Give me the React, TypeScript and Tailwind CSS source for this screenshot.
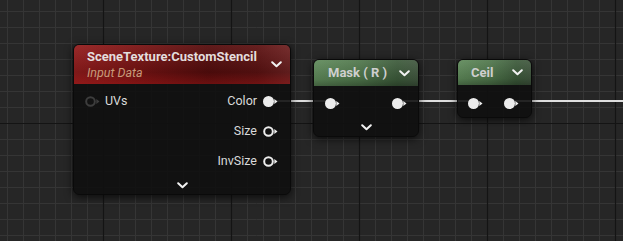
import React from "react";

function Pin({ filled, dim }: { filled?: boolean; dim?: boolean }) {
  const c = dim ? "#3d3d3d" : "#ececec";
  return (
    <svg width="15" height="11" viewBox="0 0 15 11" className="shrink-0">
      {filled ? (
        <circle cx="5.5" cy="5.5" r="5.5" fill={c} />
      ) : (
        <circle cx="5.5" cy="5.5" r="4.3" fill={dim ? "#121212" : "none"} stroke={c} strokeWidth="2" />
      )}
      <path d="M11.3 3 L14.5 5.5 L11.3 8 Z" fill={c} />
    </svg>
  );
}

function Chevron() {
  return (
    <svg width="11" height="7" viewBox="0 0 11 7" className="shrink-0">
      <polyline points="1.2,1.2 5.5,5.3 9.8,1.2" fill="none" stroke="#f2f2f2" strokeWidth="2" strokeLinecap="round" strokeLinejoin="round" />
    </svg>
  );
}

function Grid() {
  const v: number[] = [];
  for (let x = 7; x < 623; x += 16) v.push(x);
  const h: number[] = [];
  for (let y = 11; y < 241; y += 16) h.push(y);
  const majorX = (x: number) => (x - 103) % 128 === 0;
  const majorY = (y: number) => y === 123;
  return (
    <svg className="absolute inset-0" width="623" height="241" viewBox="0 0 623 241">
      <rect width="623" height="241" fill="#262626" />
      {v.filter((x) => !majorX(x)).map((x) => (
        <line key={"v" + x} x1={x + 0.5} y1={0} x2={x + 0.5} y2={241} stroke="#353535" strokeWidth="1" />
      ))}
      {h.filter((y) => !majorY(y)).map((y) => (
        <line key={"h" + y} x1={0} y1={y + 0.5} x2={623} y2={y + 0.5} stroke="#353535" strokeWidth="1" />
      ))}
      {v.filter(majorX).map((x) => (
        <line key={"V" + x} x1={x + 0.5} y1={0} x2={x + 0.5} y2={241} stroke="#141414" strokeWidth="1.2" />
      ))}
      {h.filter(majorY).map((y) => (
        <line key={"H" + y} x1={0} y1={y + 0.5} x2={623} y2={y + 0.5} stroke="#141414" strokeWidth="1.2" />
      ))}
      <line x1="272" y1="101" x2="330" y2="101" stroke="#dedede" strokeWidth="2" />
      <line x1="400" y1="101" x2="472" y2="101" stroke="#dedede" strokeWidth="2" />
      <line x1="512" y1="101" x2="623" y2="101" stroke="#dedede" strokeWidth="2" />
    </svg>
  );
}

export default function App() {
  const font = { fontFamily: "Roboto, 'Noto Sans', sans-serif" };
  return (
    <div className="relative w-[623px] h-[241px] overflow-hidden bg-[#262626]" style={font}>
      <Grid />

      {/* SceneTexture node */}
      <div className="absolute left-[73px] top-[44px] w-[218px] h-[151px] rounded-[6px] border border-[#0a0a0a] bg-[#0f100f]/90 shadow-[0_2px_8px_rgba(0,0,0,0.7)] overflow-hidden flex flex-col">
        <div className="h-[39px] shrink-0 flex items-center justify-between pl-[13px] pr-[8px] bg-[linear-gradient(to_bottom,rgba(255,255,255,0.06),rgba(0,0,0,0.15)_70%,rgba(140,20,20,0.4)),linear-gradient(to_right,#951d1d_0%,#7c1414_28%,#560d0d_62%,#5d1212_85%,#6f2222_100%)]">
          <div className="flex flex-col">
            <div className="text-[13px] font-bold leading-[15px] text-[#e4dddd]">SceneTexture:CustomStencil</div>
            <div className="text-[12.5px] italic leading-[17px] text-[#c99a7a]">Input Data</div>
          </div>
          <Chevron />
        </div>
        <div className="flex-1 flex flex-col pt-[2px]">
          <div className="h-[30px] flex items-center justify-between pl-[11px] pr-[12px]">
            <div className="flex items-center gap-[5px]">
              <Pin dim />
              <span className="text-[12.5px] text-[#dadada]">UVs</span>
            </div>
            <div className="flex items-center gap-[6px]">
              <span className="text-[12.5px] text-[#dadada]">Color</span>
              <Pin filled />
            </div>
          </div>
          <div className="h-[30px] flex items-center justify-end pr-[12px]">
            <div className="flex items-center gap-[6px]">
              <span className="text-[12.5px] text-[#dadada]">Size</span>
              <Pin />
            </div>
          </div>
          <div className="h-[30px] flex items-center justify-end pr-[12px]">
            <div className="flex items-center gap-[6px]">
              <span className="text-[12.5px] text-[#dadada]">InvSize</span>
              <Pin />
            </div>
          </div>
          <div className="h-[18px] flex items-center justify-center">
            <Chevron />
          </div>
        </div>
      </div>

      {/* Mask node */}
      <div className="absolute left-[313px] top-[59px] w-[106px] h-[78px] rounded-[6px] border border-[#0a0a0a] bg-[#0f100f]/90 shadow-[0_2px_8px_rgba(0,0,0,0.7)] overflow-hidden flex flex-col">
        <div className="h-[26px] shrink-0 flex items-center justify-between pl-[14px] pr-[8px] bg-[linear-gradient(to_bottom,rgba(255,255,255,0.08),rgba(0,0,0,0.12)_75%,rgba(0,0,0,0.3)),linear-gradient(to_right,#5f8a5a_0%,#4f764b_45%,#3c5a3a_80%,#41573f_100%)]">
          <span className="text-[13px] font-bold text-[#cfcfcf]">Mask ( R )</span>
          <Chevron />
        </div>
        <div className="flex-1 flex flex-col pt-[2px]">
          <div className="h-[30px] flex items-center justify-between pl-[11px] pr-[11px]">
            <Pin filled />
            <Pin filled />
          </div>
          <div className="h-[18px] flex items-center justify-center">
            <Chevron />
          </div>
        </div>
      </div>

      {/* Ceil node */}
      <div className="absolute left-[457px] top-[59px] w-[75px] h-[59px] rounded-[6px] border border-[#0a0a0a] bg-[#0f100f]/90 shadow-[0_2px_8px_rgba(0,0,0,0.7)] overflow-hidden flex flex-col">
        <div className="h-[25px] shrink-0 flex items-center justify-between pl-[13px] pr-[8px] bg-[linear-gradient(to_bottom,rgba(255,255,255,0.08),rgba(0,0,0,0.12)_75%,rgba(0,0,0,0.3)),linear-gradient(to_right,#5f8a5a_0%,#4f764b_45%,#3c5a3a_80%,#41573f_100%)]">
          <span className="text-[13px] font-bold text-[#cfcfcf]">Ceil</span>
          <Chevron />
        </div>
        <div className="flex-1 flex flex-col pt-[3px]">
          <div className="h-[30px] flex items-center justify-between pl-[10px] pr-[12px]">
            <Pin filled />
            <Pin filled />
          </div>
        </div>
      </div>
    </div>
  );
}
